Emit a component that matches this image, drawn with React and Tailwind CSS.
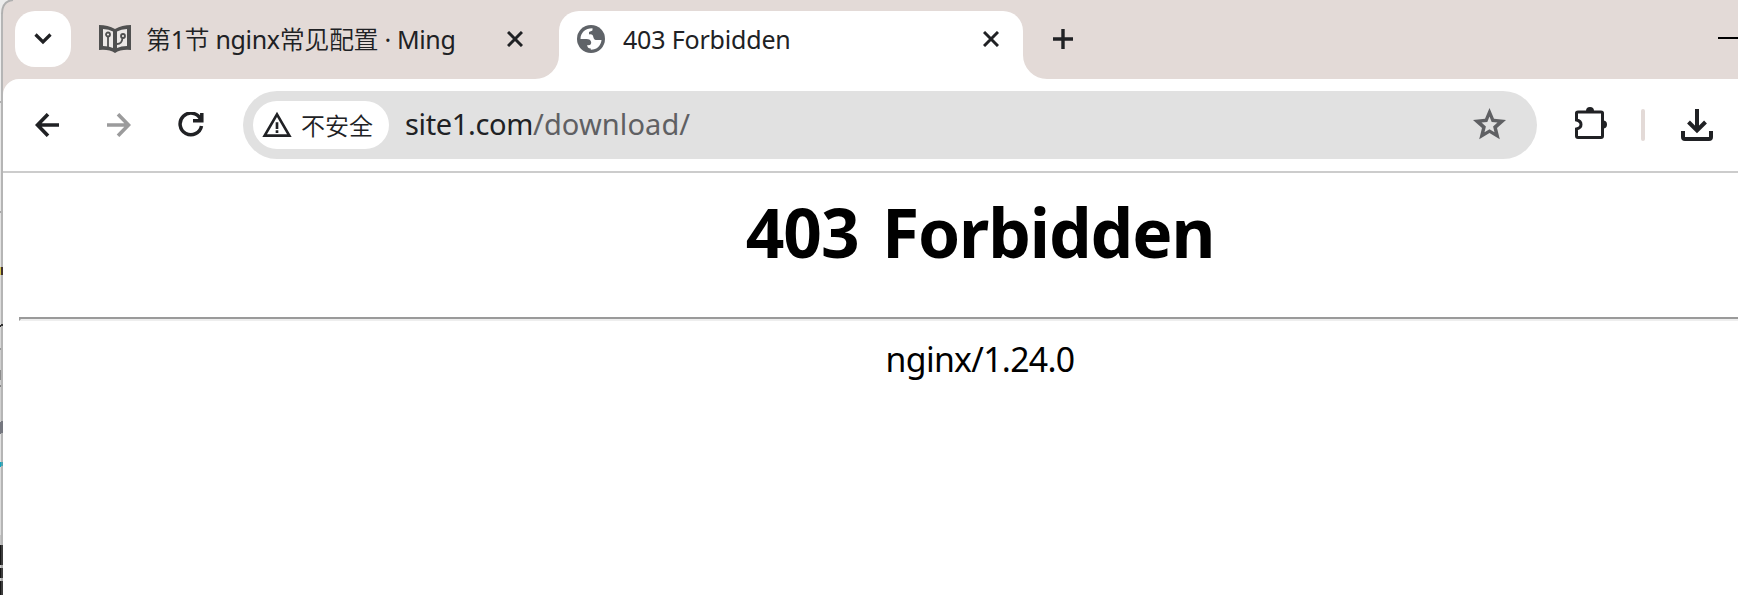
import React from "react";
import { MdWarningAmber } from "react-icons/md";

const edge = [
  [101, "bg-[#eeeeee]"], [2, "bg-[#b0b0b0]"], [108, "bg-[#e8e8e8]"], [2, "bg-[#a8a8a8]"],
  [54, "bg-[#e4e4e4]"], [8, "bg-[#d8c850]"], [50, "bg-[#dddddd]"], [2, "bg-[#2b2b2b]"],
  [21, "bg-[#d8d8d8]"], [2, "bg-[#999999]"], [20, "bg-[#cfcfcf]"], [10, "bg-[#8c8c8c]"],
  [5, "bg-[#cfcfcf]"], [2, "bg-[#888888]"], [35, "bg-[#d0d0d0]"], [12, "bg-[#75777f]"],
  [28, "bg-[#e2e2e2]"], [5, "bg-[#12a5c0]"], [68, "bg-[#dcdcdc]"], [10, "bg-[#c4c4c4]"],
  [20, "bg-[#151515]"], [3, "bg-[#cccccc]"], [10, "bg-[#151515]"], [3, "bg-[#cccccc]"], [14, "bg-[#151515]"],
];
const frame = [
  [267, "bg-[#b5b5b5]"], [8, "bg-[#40302f]"], [49, "bg-[#b5b5b5]"], [2, "bg-[#303030]"],
  [95, "bg-[#b5b5b5]"], [12, "bg-[#75777f]"], [29, "bg-[#b5b5b5]"], [4, "bg-[#4ba3b0]"], [79, "bg-[#b5b5b5]"],
  [20, "bg-[#3c3c3c]"], [3, "bg-[#aaaaaa]"], [10, "bg-[#3c3c3c]"], [3, "bg-[#aaaaaa]"], [14, "bg-[#3c3c3c]"],
];

function Strip({ parts, width }) {
  return (
    <div className={"flex flex-col shrink-0 " + width}>
      {parts.map(([h, c], i) => <div key={i} className={"shrink-0 " + c} style={{ height: h }} />)}
    </div>
  );
}

function Close() {
  return (
    <svg className="w-4 h-4 shrink-0" viewBox="0 0 16 16" stroke="#202124" strokeWidth="3" fill="none">
      <path d="M1 1 15 15M15 1 1 15" />
    </svg>
  );
}

export default function App() {
  return (
    <div className="relative flex h-[595px] w-[1738px] overflow-hidden bg-white font-['Noto_Sans','Noto_Sans_CJK_SC',sans-serif] text-[#202124]">
      <Strip parts={edge} width="w-px" />
      <Strip parts={frame} width="w-[2px]" />
      <div className="flex min-w-0 flex-1 flex-col">
        <div className="flex h-[79px] shrink-0 bg-[#e3dad7]">
          <div className="ml-3 mt-[11px] flex h-14 w-14 shrink-0 items-center justify-center rounded-[20px] bg-white">
            <svg width="18" height="12" viewBox="0 0 18 12" fill="none" stroke="#202124" strokeWidth="3.2"><path d="M1.500 1.500 9 9 16.500 1.500" /></svg>
          </div>
          <div className="ml-7 flex h-[79px] w-[460px] shrink-0 items-start">
            <svg className="mt-6 shrink-0" width="32" height="29" viewBox="0 0 32 29">
              <path d="M0 1Q9 1 16 5Q23 1 32 1V26Q22 25 16 29Q10 25 0 26Z" fill="#505050" />
              <path d="M4 5Q10 5 14 7.500V24Q10 22 4 22ZM28 5Q22 5 18 7.500V24Q22 22 28 22Z" fill="#ede9e7" />
              <g fill="none" stroke="#505050" strokeWidth="1.800"><circle cx="9" cy="10.500" r="2" /><path d="M9 12.500V23" /><circle cx="24" cy="12" r="2" /><path d="M23.500 14Q23 20 18 20" /></g>
            </svg>
            <div className="ml-[15px] mt-[21px] h-9 w-[361px] shrink-0 whitespace-nowrap text-[25px] leading-9 tracking-[-0.35px]">
              <span className="font-[350]">第</span>1<span className="font-[350]">节</span> nginx<span className="font-[350]">常见配置</span> · Ming
            </div>
            <div className="mt-[31px]"><Close /></div>
          </div>
          <div className="relative flex h-[79px] w-[464px] shrink-0 items-start">
            <div className="absolute inset-x-0 bottom-0 top-[11px] rounded-t-[20px] bg-white" />
            <svg className="absolute -left-6 bottom-0" width="24" height="24"><path d="M24 0V24H0A24 24 0 0 0 24 0Z" fill="#fff" /></svg>
            <svg className="absolute -right-6 bottom-0" width="24" height="24"><path d="M0 0V24H24A24 24 0 0 1 0 0Z" fill="#fff" /></svg>
            <svg className="relative ml-[18px] mt-[25px] shrink-0" width="28" height="28" viewBox="0 0 28 28">
              <circle cx="14" cy="14" r="14" fill="#5f6368" />
              <path d="M3.500 14C3.500 8 8 3.300 15.500 3.300V5C15.500 6.500 12 6 12 7.500V9.500C15 9 16 10 16.300 12C16.800 14.500 18 15 20 15H24.500C24 20.500 20 24.800 13.800 24.800V23.500C11 23.500 10.300 22 10.300 20C13 20.500 14.200 19.500 14.200 17.500C14.200 15 12 14 9.500 14Z" fill="#fff" />
            </svg>
            <div className="relative ml-[18px] mt-[21px] h-9 w-[360px] whitespace-nowrap text-[25px] leading-9 tracking-[-0.18px]">403 Forbidden</div>
            <div className="relative mt-[31px]"><Close /></div>
          </div>
          <svg className="ml-[30px] mt-[29px] shrink-0" width="20" height="20" stroke="#202124" strokeWidth="3.4"><path d="M10 0V20M0 10H20" /></svg>
          <div className="ml-auto mt-[37px] h-[2px] w-5 bg-black" />
        </div>
        <div className="h-0 w-full"><svg className="relative block" width="16" height="16"><path d="M0 0H16A16 16 0 0 0 0 16Z" fill="#e3dad7" /></svg></div>
        <div className="flex h-[94px] shrink-0 items-center border-b-2 border-[#cccccc]">
          <svg className="ml-8" width="24" height="24" viewBox="0 0 24 24" fill="none" stroke="#202124" strokeWidth="3.6"><path d="M24 12H2.500M13 1.200 2.500 12 13 22.800" /></svg>
          <svg className="ml-12" width="24" height="24" viewBox="0 0 24 24" fill="none" stroke="#9b9b9c" strokeWidth="3.6"><path d="M0 12H21.500M11 1.200 21.500 12 11 22.800" /></svg>
          <svg className="ml-[47px]" width="26" height="26" viewBox="0 0 26 26" fill="none" stroke="#202124" strokeWidth="3.5"><path d="M22.500 7A10.800 10.800 0 1 0 23.500 14M23.800 1V8.800H15" /></svg>
          <div className="ml-[39px] flex h-[68px] w-[1294px] shrink-0 items-center rounded-full bg-[#e1e1e1]">
            <div className="ml-[10px] flex h-12 w-[136px] shrink-0 items-center rounded-full bg-white">
              <MdWarningAmber className="ml-2 shrink-0" size={32} color="#202124" />
              <span className="ml-2 mt-0.5 text-2xl font-[350] leading-none">不安全</span>
            </div>
            <div className="-mt-0.5 ml-4 whitespace-nowrap text-[29px] leading-10 tracking-[-0.35px]">site1.com<span className="tracking-[0.1px] text-[#5f6063]">/download/</span></div>
            <svg className="-mt-0.5 ml-auto mr-[31px] shrink-0" width="33" height="32" viewBox="0 0 33 32">
              <path fillRule="evenodd" fill="#5f6063" d="M16.500 0 21 10.800 33 12 24 20 26.800 31.300 16.500 25 6.200 31.300 9 20 0 12 12 10.800ZM16.500 8.500 14.300 14 8.500 14.600 12.900 18.500 11.500 24.200 16.500 21.200 21.500 24.200 20.100 18.500 24.500 14.600 18.700 14Z" />
            </svg>
          </div>
          <svg className="-mt-1 ml-[37px]" width="34" height="34" viewBox="0 0 34 34"><path d="M4 6H27Q28.500 6 28.500 7V30Q28.500 31.500 27 31.500H4Q2.500 31.500 2.500 30V23Q7 22 7 18.500Q7 15 2.500 14V7Q2.500 6 4 6Z" fill="none" stroke="#202124" strokeWidth="3" /><path d="M12 5A4 4 0 0 1 20 5ZM29 14.500A4 4 0 0 1 29 22.500Z" fill="#202124" /></svg>
          <div className="ml-[33px] h-8 w-1 rounded-full bg-[#e3dad7]" />
          <svg className="ml-9" width="32" height="32" viewBox="0 0 32 32" fill="none" stroke="#202124" strokeWidth="4"><path d="M16 0V21M7.500 13 16 21.500 24.500 13M2 22V28Q2 30 4 30H28Q30 30 30 28V22" /></svg>
        </div>
        <div className="flex w-[1938px] flex-1 flex-col pl-4 text-black">
          <h1 className="mt-[13px] h-[92px] whitespace-nowrap text-center text-[67.6px] font-bold leading-[92px] tracking-[-1.1px] [word-spacing:7px]">403 Forbidden</h1>
          <div className="mt-[39px] h-1 border-y-2 border-l-2 border-t-[#9a9a9a] border-l-[#9a9a9a] border-b-[#eeeeee]" />
          <p className="mt-[15px] text-center text-[33.8px] leading-[46px] tracking-[-0.7px]">nginx/1.24.0</p>
        </div>
      </div>
      <svg className="absolute left-0 top-0" width="14" height="14" viewBox="0 0 14 14">
        <path d="M0 0H12Q2 1 2 14H0Z" fill="#ececec" />
        <path d="M13 0Q2 1 2 14" fill="none" stroke="#b0b0b0" strokeWidth="2" />
      </svg>
    </div>
  );
}
